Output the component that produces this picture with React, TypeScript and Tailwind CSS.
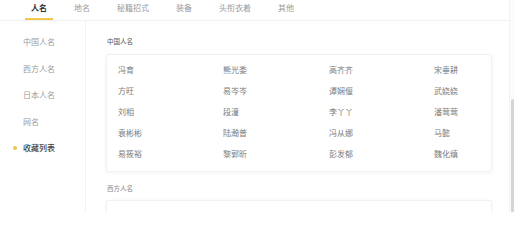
import React from "react";

const tabs = ["人名", "地名", "秘籍招式", "装备", "头衔衣着", "其他"];
const sideItems = ["中国人名", "西方人名", "日本人名", "网名", "收藏列表"];

const chineseNames = [
  ["冯育", "熊光委", "高齐齐", "宋垂耕"],
  ["方旺", "易岑岑", "谭娴偃", "武娆娆"],
  ["刘相", "段潼", "李丫丫", "潘莺莺"],
  ["袁彬彬", "陆瀚普", "冯从娜", "马懿"],
  ["易筱裕", "黎郭昕", "彭发郁", "魏化缜"],
];

const NameCard = ({ rows }: { rows: string[][] }) => (
  <div className="w-[386px] rounded-[2px] border border-[#f1f1f1] bg-white shadow-[0_1px_4px_rgba(0,0,0,0.05)] pl-[11px] pt-[5px] pb-[6px]">
    {rows.map((row, i) => (
      <div
        key={i}
        className="grid h-[21px] grid-cols-[105px_106px_105px_auto] items-center text-[8px] leading-none text-[#7c7c7c]"
      >
        {row.map((n) => (
          <span key={n}>{n}</span>
        ))}
      </div>
    ))}
  </div>
);

export default function App() {
  return (
    <div
      className="flex h-[212px] w-[520px] overflow-hidden bg-white"
      style={{ fontFamily: '"Noto Sans CJK SC", "Noto Sans", sans-serif' }}
    >
      <div className="flex w-[509px] flex-col">
        {/* top tabs */}
        <div className="flex h-[21px] shrink-0 gap-[15px] border-b border-[#f0f0f0] pl-[25px]">
          {tabs.map((t, i) => (
            <div
              key={t}
              className={`flex h-full items-center px-[6px] pb-[2px] text-[8px] leading-none ${
                i === 0
                  ? "border-b-2 border-[#f3c74d] font-bold text-[#333]"
                  : "border-b-2 border-transparent text-[#9a9a9a]"
              }`}
            >
              {t}
            </div>
          ))}
        </div>

        <div className="flex min-h-0 flex-1">
          {/* sidebar */}
          <div className="flex w-[86px] shrink-0 flex-col border-r border-[#f3f3f3] pt-[8px]">
            {sideItems.map((s, i) => {
              const active = i === sideItems.length - 1;
              return (
                <div key={s} className="flex h-[26.5px] items-center pl-[13px]">
                  <span
                    className={`mr-[6px] h-[4px] w-[4px] rounded-full ${
                      active ? "bg-[#f0c24f]" : "bg-transparent"
                    }`}
                  />
                  <span
                    className={`text-[8px] leading-none ${
                      active ? "font-medium text-[#444]" : "text-[#9a9a9a]"
                    }`}
                  >
                    {s}
                  </span>
                </div>
              );
            })}
          </div>

          {/* content */}
          <div className="flex min-w-0 flex-1 flex-col pl-[20px] pt-[17px]">
            <div className="pl-[1px] text-[6.5px] leading-none text-[#555]">中国人名</div>
            <div className="mt-[9px]">
              <NameCard rows={chineseNames} />
            </div>
            <div className="mt-[13px] pl-[1px] text-[6.5px] leading-none text-[#888]">西方人名</div>
            <div className="mt-[9px] h-[40px] w-[386px] shrink-0 rounded-[2px] border border-[#f1f1f1] bg-white shadow-[0_1px_4px_rgba(0,0,0,0.05)]" />
          </div>
        </div>
      </div>

      {/* scrollbar */}
      <div className="flex w-[5px] shrink-0 flex-col border-l border-[#f2f2f2] bg-[#fbfbfb]">
        <div className="h-[99px]" />
        <div className="mx-auto w-[3px] flex-1 rounded-full bg-[#d4d4d4]" />
      </div>
    </div>
  );
}
